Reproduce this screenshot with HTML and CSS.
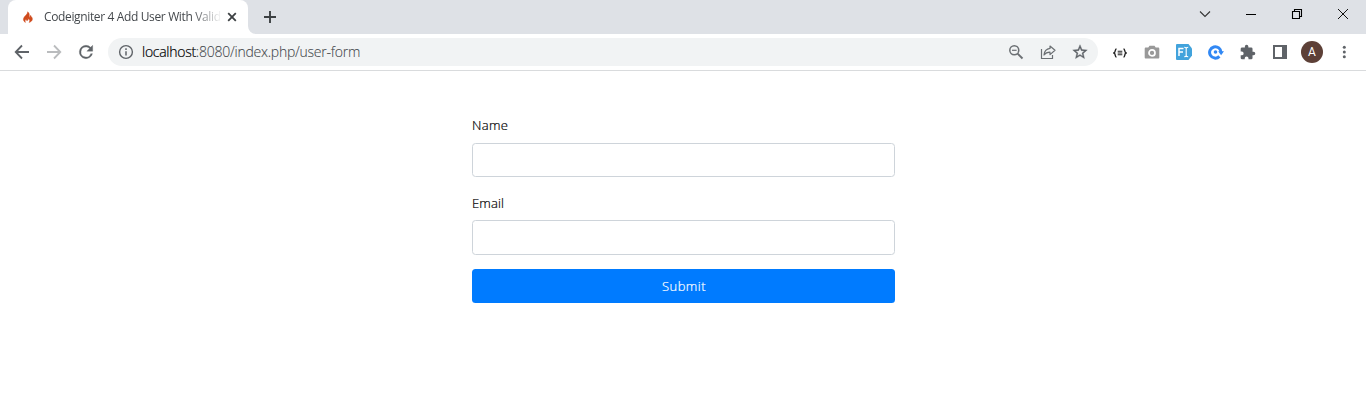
FILE: index.html
```html
<!DOCTYPE html>
<html lang="en">
<head>
<meta charset="utf-8">
<title>Codeigniter 4 Add User With Validation</title>
<link rel="stylesheet" href="styles.css">
</head>
<body>
<header class="tabstrip">
  <div class="tab">
    <svg class="flame" width="12" height="14" viewBox="0 0 12 14"><path d="M5.600 1.800c.4 1.700-1.500 3-2.800 4.500C.6 8.900 1.100 11.300 3.500 12.400 2.900 11.200 3.100 10 4.200 9c-.1 1.100.3 1.600 1 1.600 1 0 1-1 .5-2 2 .6 2.700 2.300 1.300 3.800 2.600-.6 4.100-2.600 3.100-4.700C9.500 6.800 8.700 6.200 8.600 5.200c-.7.700-.7 1.400-.4 2.200-.8-.2-1-.8-.9-1.600C7.500 4.200 7.100 2.700 5.600 1.800z" fill="#cf4a1c" stroke="#cf4a1c" stroke-width=".4"/></svg>
    <span class="tab-title">Codeigniter 4 Add User With Valid</span>
    <svg class="tab-close" width="10" height="10" viewBox="0 0 10 10"><path d="M1.200 1.200l7.600 7.600M8.800 1.200L1.200 8.800" stroke="#3c4043" stroke-width="1.800"/></svg>
  </div>
  <svg class="corner" width="8" height="8" viewBox="0 0 8 8"><path d="M0 0a8 8 0 0 0 8 8H0z" fill="#fff"/></svg>
  <svg class="new-tab" width="12" height="12" viewBox="0 0 12 12"><path d="M6 0v12M0 6h12" stroke="#3c4043" stroke-width="1.900"/></svg>
  <div class="window-controls">
    <span><svg width="12" height="12" viewBox="0 0 12 12"><path d="M1 3.500l5 5 5-5" fill="none" stroke="#333" stroke-width="1.100"/></svg></span>
    <span><svg width="12" height="12" viewBox="0 0 12 12"><path d="M1 6.500h10" stroke="#000"/></svg></span>
    <span><svg width="12" height="12" viewBox="0 0 12 12"><path d="M1.500 3.500h7v7h-7zM3.500 3V1.500h7v7H9" fill="none" stroke="#000" stroke-width="1.100"/></svg></span>
    <span><svg width="12" height="12" viewBox="0 0 12 12"><path d="M1 1l10 10M11 1L1 11" stroke="#111"/></svg></span>
  </div>
</header>
<nav class="toolbar">
  <span class="slot"><svg width="20" height="20" viewBox="0 0 20 20"><path d="M17 10H4M10 3.500L3.700 10l6.300 6.500" fill="none" stroke="#5f6368" stroke-width="1.800"/></svg></span>
  <span class="slot"><svg width="20" height="20" viewBox="0 0 20 20"><path d="M3 10h13M10 3.500l6.300 6.500-6.300 6.500" fill="none" stroke="#babcbe" stroke-width="1.800"/></svg></span>
  <span class="slot"><svg width="20" height="20" viewBox="0 0 24 24"><path d="M17.650 6.350A7.960 7.960 0 0 0 12 4a8 8 0 1 0 7.730 10h-2.080A6 6 0 1 1 12 6c1.660 0 3.140.690 4.220 1.780L13 11h7V4z" fill="#5f6368" stroke="#5f6368" stroke-width=".4"/></svg></span>
  <div class="omnibox">
    <svg class="info" width="16" height="16" viewBox="0 0 16 16"><circle cx="8" cy="8" r="6.400" fill="none" stroke="#5f6368" stroke-width="1.400"/><path d="M8 7.200v4.300M8 4.300v1.600" stroke="#5f6368" stroke-width="1.500"/></svg>
    <span class="url"><b>localhost</b>:8080/index.php/user-form</span>
    <span class="slot omni-first"><svg width="16" height="16" viewBox="0 0 16 16"><circle cx="6.300" cy="6.300" r="4.500" fill="none" stroke="#6b6f73" stroke-width="1.500"/><path d="M9.600 9.600l4.900 4.900" stroke="#6b6f73" stroke-width="1.900"/><path d="M4 6.300h4.600" stroke="#6b6f73" stroke-width="1.200"/></svg></span>
    <span class="slot"><svg width="16" height="16" viewBox="0 0 16 16"><path d="M1.500 5v9.500h11V11" fill="none" stroke="#6b6f73" stroke-width="1.200"/><path d="M10 2l5 4.300-5 4.300V8.200C7.200 8.200 5.300 9.200 4 11c.3-3.600 2.300-6.100 6-6.600z" fill="none" stroke="#6b6f73" stroke-width="1.200" stroke-linejoin="round"/></svg></span>
    <span class="slot"><svg width="16" height="16" viewBox="1 1 22 22"><path d="M22 9.240l-7.190-.620L12 2 9.190 8.630 2 9.240l5.460 4.730L5.820 21 12 17.270 18.180 21l-1.630-7.030zM12 15.400l-3.760 2.270 1-4.280-3.320-2.880 4.380-.380L12 6.100l1.710 4.040 4.380.380-3.320 2.880 1 4.280z" fill="#5f6368" stroke="#5f6368" stroke-width=".5"/></svg></span>
  </div>
  <div class="extensions">
    <span class="slot"><svg class="braces" width="14" height="10" viewBox="0 0 14 10"><path d="M3.500 1C1.700 1 2.900 4.300 1 5c1.900.7.700 4 2.500 4M10.500 1c1.800 0 .6 3.300 2.500 4-1.900.7-.7 4-2.500 4" fill="none" stroke="#252525" stroke-width="1.400"/><path d="M4.700 3.200h4.600M4.700 5h4.600M4.700 6.800h4.600" stroke="#252525" stroke-width="1.100"/></svg></span>
    <span class="slot"><svg width="16" height="16" viewBox="0 0 16 16"><path d="M2 3.600h2.300L5.500 1.800h5l1.200 1.800H14c.9 0 1.300.5 1.300 1.300v8.300c0 .8-.4 1.300-1.300 1.300H2c-.9 0-1.300-.5-1.300-1.300V4.900c0-.8.400-1.300 1.300-1.300z" fill="#999"/><circle cx="8" cy="8.900" r="3" fill="none" stroke="#fff" stroke-width="1.700"/></svg></span>
    <span class="slot"><svg width="16" height="16" viewBox="0 0 16 16"><path d="M1 0h11.500L16 4.500v7L12.500 16H1a1 1 0 0 1-1-1V1a1 1 0 0 1 1-1z" fill="#42a3dc"/><path d="M3 12V4.500h4.500M3 8h4" fill="none" stroke="#fff" stroke-width="1.500"/><path d="M8.500 3.200c1.300 0 2 .4 2 1.300v7c0 .9-.7 1.300-2 1.300M12.500 3.200c-1.300 0-2 .4-2 1.300M12.500 12.800c-1.300 0-2-.4-2-1.300" transform="translate(-.3)" fill="none" stroke="#fff" stroke-width="1.100"/></svg></span>
    <span class="slot"><svg width="16" height="16" viewBox="0 0 16 16"><path d="M13 8.500A5.700 5.700 0 1 0 11.400 12.400" fill="none" stroke="#3188f4" stroke-width="3"/><path d="M10.200 7.300H16l-2.900 4z" fill="#3188f4"/><circle cx="7.500" cy="8" r="1.800" fill="#3188f4"/></svg></span>
    <span class="slot"><svg width="16" height="16" viewBox="1 0 23 23"><path d="M20.500 11H19V7a2 2 0 0 0-2-2h-4V3.500a2.500 2.500 0 0 0-5 0V5H4a2 2 0 0 0-2 2v3.800h1.500a2.700 2.700 0 0 1 0 5.400H2V20a2 2 0 0 0 2 2h3.800v-1.500a2.700 2.700 0 0 1 5.400 0V22H17a2 2 0 0 0 2-2v-4h1.500a2.500 2.500 0 0 0 0-5z" fill="#5f6368"/></svg></span>
    <span class="slot"><svg width="14" height="14" viewBox="0 0 14 14"><path d="M0 0h14v14H0zM2 2v10h7V2z" fill="#5f6368" fill-rule="evenodd"/></svg></span>
    <span class="slot"><span class="avatar">A</span></span>
    <span class="slot"><svg width="4" height="14" viewBox="0 0 4 14"><g fill="#5f6368"><circle cx="2.300" cy="2.200" r="1.500"/><circle cx="2.300" cy="7" r="1.500"/><circle cx="2.300" cy="11.800" r="1.500"/></g></svg></span>
  </div>
</nav>
<main class="page">
  <form class="user-form">
    <label class="label-name" for="name"><span>Name</span></label>
    <input class="field" id="name" type="text">
    <label class="label-email" for="email"><span>Email</span></label>
    <input class="field field-email" id="email" type="text">
    <button class="submit" type="button">Submit</button>
  </form>
</main>
</body>
</html>
```
FILE: styles.css
```css
* { box-sizing: border-box; }
body { margin: 0; height: 410px; overflow: hidden; background: #fff; font-family: "Open Sans", "Noto Sans", sans-serif; }
svg { display: block; flex: none; }
.tabstrip { height: 34px; display: flex; background: #dee1e6; padding-left: 8px; }
.tab { width: 240px; height: 34px; background: #fff; border-radius: 8px 8px 0 0; display: flex; align-items: center; padding-left: 14px; }
.flame { margin-right: 10px; }
.tab-title { width: 177px; height: 20px; line-height: 20px; overflow: hidden; white-space: nowrap; font-size: 12px; letter-spacing: -.36px; color: #45494d; -webkit-mask-image: linear-gradient(to right, #000 148px, transparent 178px); mask-image: linear-gradient(to right, #000 148px, transparent 178px); }
.tab-close { margin-left: 6px; }
.corner { align-self: flex-end; }
.new-tab { margin: 11px 0 0 8px; }
.window-controls { display: flex; margin-left: auto; height: 28px; }
.window-controls span { width: 46px; display: flex; align-items: center; justify-content: center; }
.toolbar { height: 37px; display: flex; padding: 0 6px; border-bottom: 1px solid #d9dbdd; }
.slot { width: 32px; height: 36px; display: flex; flex: none; align-items: center; justify-content: center; }
.omnibox { width: 990px; height: 28px; margin: 4px 0 0 6px; border-radius: 14px; background: #f1f3f4; display: flex; align-items: center; padding: 0 2px 0 10px; }
.url { margin-left: 8px; font-size: 14px; font-weight: 300; letter-spacing: -.24px; line-height: 20px; color: #45494d; white-space: nowrap; -webkit-text-stroke: .1px #45494d; }
.url b { font-weight: 300; letter-spacing: -.27px; color: #000; -webkit-text-stroke: .2px #000; }
.omni-first { margin-left: auto; }
.extensions { display: flex; margin-left: 6px; }
.braces { margin-top: 1px; }
.avatar { width: 22px; height: 22px; border-radius: 50%; background: #5d4037; color: #fff; font: 12px/22px Roboto, sans-serif; text-align: center; }
.page { display: flex; justify-content: center; padding-top: 42px; }
.user-form { width: 423px; margin-left: 1px; display: flex; flex-direction: column; font-size: 13px; font-weight: 300; }
.label-name, .label-email { height: 24px; line-height: 24px; color: #000; letter-spacing: .35px; -webkit-text-stroke: .2px #000; }
.label-email { margin-top: 14px; letter-spacing: .15px; }
.field { width: 100%; height: 34px; margin: 5px 0 0; border: 1px solid #ced4da; border-radius: 3.500px; background: #fff; padding: 5px 10px; outline: none; }
.label-name + .field { margin-top: 6px; }
.field-email { height: 35px; }
.submit { height: 34px; margin-top: 14px; padding: 0 0 0 1px; border: 0; border-radius: 3.500px; background: #007bff; color: #fff; font: 300 13px/34px "Open Sans", sans-serif; letter-spacing: .45px; -webkit-text-stroke: .2px #fff; }
```
